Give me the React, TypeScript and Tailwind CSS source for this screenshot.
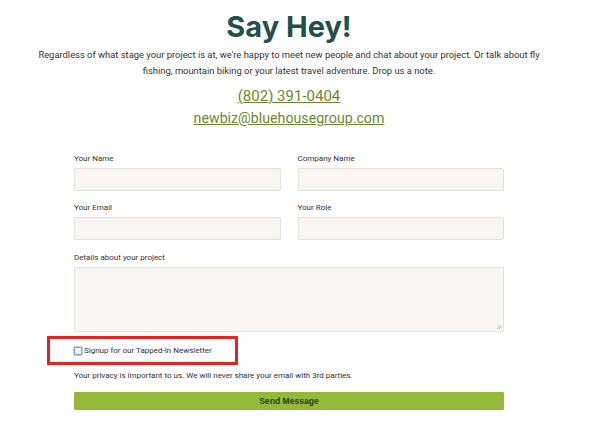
const field = "h-[23px] border border-[#e2e1dc] bg-[#f7f6f2] rounded-[2px]";

function Field({ label }: { label: string }) {
  return (
    <label className="flex flex-col gap-[4px]">
      <span className="leading-[10px]">{label}</span>
      <span className={field} />
    </label>
  );
}

export default function App() {
  return (
    <div className="min-h-[435px] bg-white" style={{ fontFamily: 'Roboto, "Liberation Sans", sans-serif' }}>
      <div className="w-[578px] flex flex-col items-center pt-[8px]">
        <h1 className="text-[29px] leading-[38px] font-bold text-[#22504a]" style={{ fontFamily: 'Inter, sans-serif' }}>
          Say Hey!
        </h1>
        <p className="mt-[1px] whitespace-nowrap text-center text-[9.4px] leading-[16px] text-[#333]">
          Regardless of what stage your project is at, we're happy to meet new people and chat about your project. Or talk about fly
          <br />
          fishing, mountain biking or your latest travel adventure. Drop us a note.
        </p>
        <a className="mt-[7px] text-[15px] leading-[20px] text-[#6c8a2a] underline">(802) 391-0404</a>
        <a className="mt-[2px] text-[14.2px] leading-[20px] text-[#6c8a2a] underline">newbiz@bluehousegroup.com</a>

        <form className="mt-[26px] w-[430px] flex flex-col text-[8px] text-[#333]">
          <div className="grid grid-cols-2 gap-x-[17px] gap-y-[12px]">
            <Field label="Your Name" />
            <Field label="Company Name" />
            <Field label="Your Email" />
            <Field label="Your Role" />
          </div>
          <label className="mt-[13px] flex flex-col gap-[4px]">
            <span className="leading-[10px]">Details about your project</span>
            <span className="relative h-[65px] border border-[#e2e1dc] bg-[#f7f6f2] rounded-[2px]">
              <svg className="absolute right-[1px] bottom-[1px]" width="6" height="6" viewBox="0 0 6 6">
                <path d="M5 1L1 5M5 3L3 5" stroke="#999" strokeWidth="0.7" />
              </svg>
            </span>
          </label>

          <div className="-ml-[27px] mt-[4px] w-[191px] h-[29px] border-[3px] border-[#e52420] flex items-center pl-[24px]">
            <span className="shrink-0 w-[8px] h-[8px] border border-[#7d9fd6] bg-[#eef3fb] rounded-[1px] shadow-[0_0_0_1px_#b9cdee]" />
            <span className="ml-[2px] whitespace-nowrap text-[8px]">Signup for our Tapped-In Newsletter</span>
          </div>

          <p className="mt-[5px] leading-[12px]">
            Your privacy is important to us. We will never share your email with 3rd parties.
          </p>
          <button type="button" className="mt-[10px] h-[18px] bg-[#94b83a] rounded-[1px] text-[8.6px] font-bold text-[#2b3a1e]" style={{ fontFamily: '"Liberation Sans", sans-serif' }}>
            Send Message
          </button>
        </form>
      </div>
    </div>
  );
}
